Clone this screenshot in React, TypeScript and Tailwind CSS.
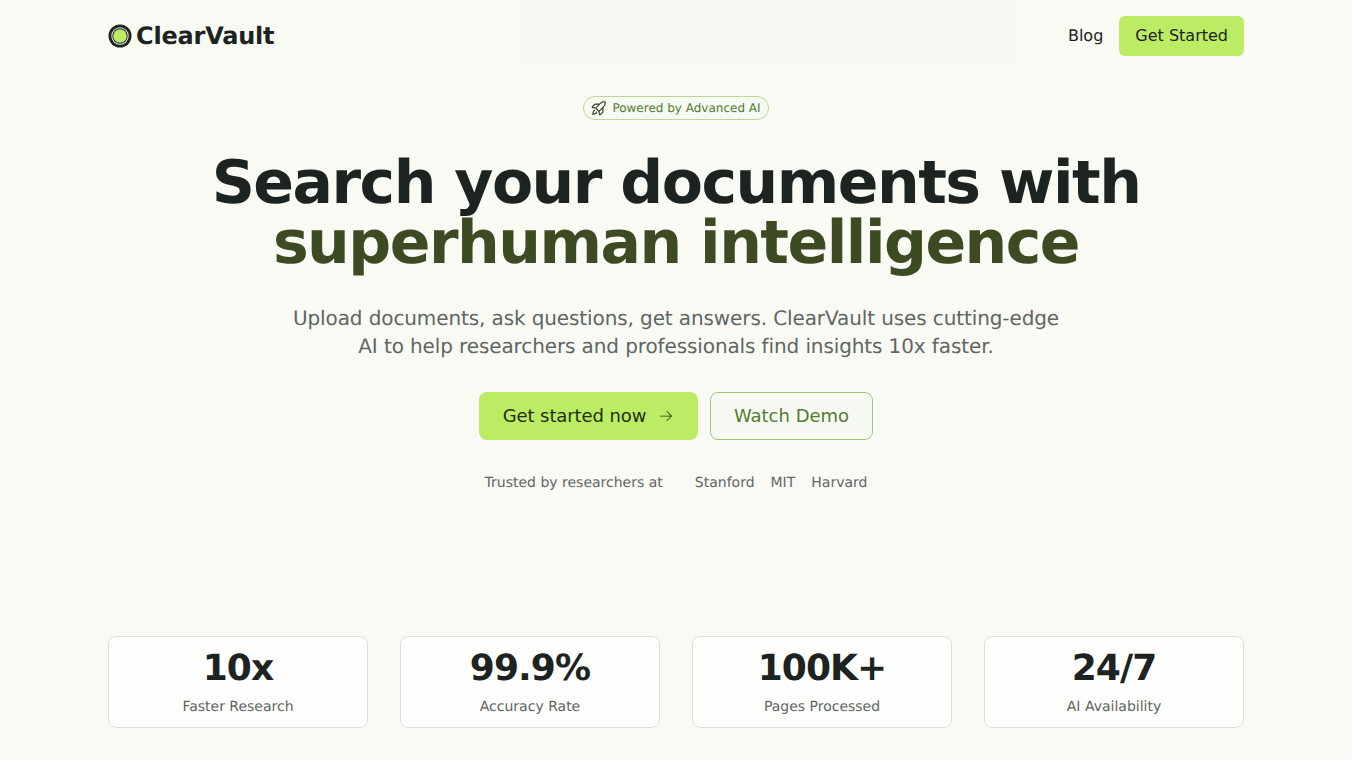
import type { JSX } from 'react';
import { PiArrowRightLight, PiRocketLaunch } from 'react-icons/pi';

const stats = [
  { value: '10x', label: 'Faster Research' },
  { value: '99.9%', label: 'Accuracy Rate' },
  { value: '100K+', label: 'Pages Processed' },
  { value: '24/7', label: 'AI Availability' },
];

const schools = ['Stanford', 'MIT', 'Harvard'];

function Logo(): JSX.Element {
  return (
    <div className="flex items-center gap-1">
      <svg width="24" height="24" viewBox="0 0 24 24" aria-hidden="true">
        <circle cx="12" cy="12" r="11.5" fill="#1c2321" />
        <circle cx="12" cy="12" r="8.7" fill="#e8ebe4" />
        <circle cx="12" cy="12" r="7.7" fill="#1c2321" />
        <circle cx="12" cy="12" r="6.8" fill="#bcec63" />
      </svg>
      <span className="text-2xl font-bold leading-8 tracking-[-0.2px] text-[#1c2321]">ClearVault</span>
    </div>
  );
}

export default function App(): JSX.Element {
  return (
    <div className="relative h-[760px] overflow-hidden bg-[#fafaf5] font-['DejaVu_Sans',sans-serif] [text-rendering:geometricPrecision]">
      {/* 上部のグロー */}
      <div className="absolute -top-1 left-[513px] h-[75px] w-[507px] bg-[#f7faf2] blur-[2px]" />

      <div className="relative mx-auto flex h-full w-[1136px] flex-col">
        <nav className="flex h-[72px] items-center justify-between">
          <Logo />
          <div className="flex items-center gap-4">
            <a className="text-base text-[#1c2321]">Blog</a>
            <button className="h-10 rounded-md bg-[#bcec63] px-4 text-base text-[#1c2321]">Get Started</button>
          </div>
        </nav>

        <main className="flex flex-col items-center pt-6">
          <div className="flex h-6 items-center gap-1 rounded-full border border-[#bdd596] bg-[#f7faf2] pl-1.5 pr-[7px] text-xs text-[#557a30]">
            <PiRocketLaunch size={18} className="text-[#2f3e1d]" />
            <span>Powered by Advanced AI</span>
          </div>

          <h1 className="mt-[33px] text-center text-6xl font-bold leading-[60px] tracking-tight text-[#1c2321]">
            Search your documents with
            <br />
            <span className="text-[#3d4a22]">superhuman intelligence</span>
          </h1>

          <p className="mt-[31px] text-center text-xl leading-7 tracking-[-0.108px] text-[#5f6663]">
            Upload documents, ask questions, get answers. ClearVault uses cutting-edge
            <br />
            AI to help researchers and professionals find insights 10x faster.
          </p>

          <div className="mt-8 flex gap-3">
            <button className="flex h-12 w-[219px] items-center justify-center gap-3 rounded-lg bg-[#bcec63] text-lg tracking-[-0.1px] text-[#1f2e0f]">
              Get started now
              <PiArrowRightLight size={16} />
            </button>
            <button className="h-12 w-[163px] rounded-lg border border-[#a3c17a] bg-[#f7faf2] text-lg text-[#557a30]">
              Watch Demo
            </button>
          </div>

          <div className="mt-[33px] flex h-5 items-center text-sm text-[#5f6663]">
            <span className="mr-8">Trusted by researchers at</span>
            <div className="flex gap-4">
              {schools.map((school) => (
                <span key={school}>{school}</span>
              ))}
            </div>
          </div>
        </main>

        <section className="mt-auto mb-8 grid grid-cols-4 gap-8">
          {stats.map((stat) => (
            <div key={stat.label} className="flex h-[92px] flex-col items-center rounded-lg border border-[#dcdfda] bg-[#fefefc] pt-[12px] text-center">
              <div className="text-4xl font-bold leading-10 tracking-tight text-[#1c2321]">{stat.value}</div>
              <div className="mt-[8px] text-sm leading-5 text-[#5f6663]">{stat.label}</div>
            </div>
          ))}
        </section>
      </div>
    </div>
  );
}
